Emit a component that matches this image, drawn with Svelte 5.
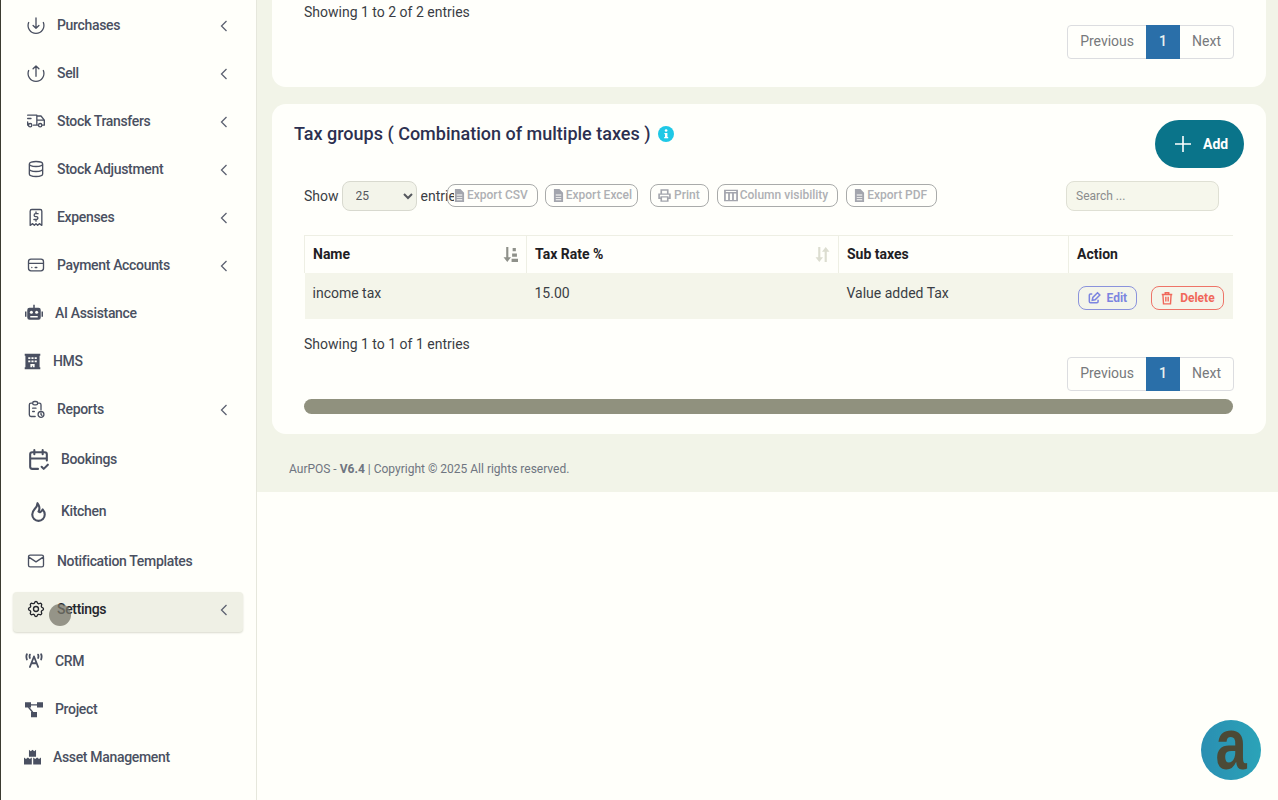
<script lang="ts">
  type NavItem = { label: string; icon: string; kind: string; arrow?: boolean; active?: boolean };

  const navItems: NavItem[] = [
    { label: 'Purchases', icon: 'download', kind: 'line', arrow: true },
    { label: 'Sell', icon: 'upload', kind: 'line', arrow: true },
    { label: 'Stock Transfers', icon: 'truck', kind: 'line', arrow: true },
    { label: 'Stock Adjustment', icon: 'database', kind: 'line', arrow: true },
    { label: 'Expenses', icon: 'receipt', kind: 'line', arrow: true },
    { label: 'Payment Accounts', icon: 'card', kind: 'line', arrow: true },
    { label: 'AI Assistance', icon: 'robot', kind: 'solid' },
    { label: 'HMS', icon: 'hotel', kind: 'solid-wide' },
    { label: 'Reports', icon: 'report', kind: 'line', arrow: true },
    { label: 'Bookings', icon: 'calendar', kind: 'tall' },
    { label: 'Kitchen', icon: 'flame', kind: 'tall' },
    { label: 'Notification Templates', icon: 'mail', kind: 'line' },
    { label: 'Settings', icon: 'settings', kind: 'line', arrow: true, active: true },
    { label: 'CRM', icon: 'tower', kind: 'solid' },
    { label: 'Project', icon: 'diagram', kind: 'solid' },
    { label: 'Asset Management', icon: 'cubes', kind: 'solid-wide' }
  ];

  const toolButtons = [
    { label: 'Export CSV', icon: 'file' },
    { label: 'Export Excel', icon: 'file' },
    { label: 'Print', icon: 'print' },
    { label: 'Column visibility', icon: 'columns' },
    { label: 'Export PDF', icon: 'file' }
  ];
</script>

{#snippet navIcon(name: string)}
  <svg class="nav-icon" viewBox="0 0 24 24" fill="none" stroke="currentColor" stroke-width="1.6" stroke-linecap="round" stroke-linejoin="round" aria-hidden="true">
    {#if name === 'download'}
      <path d="M12 3.5V16M8.5 12.5L12 16l3.5-3.5M3.2 9A9.5 9.5 0 1 0 20.8 9" />
    {:else if name === 'upload'}
      <path d="M12 16V3.5M8.5 7L12 3.5 15.5 7M3.2 9A9.5 9.5 0 1 0 20.8 9" />
    {:else if name === 'truck'}
      <path d="M5 17m-2 0a2 2 0 1 0 4 0a2 2 0 1 0-4 0M17 17m-2 0a2 2 0 1 0 4 0a2 2 0 1 0-4 0M3 17H2v-4M2 5h11v12M9 17h6M19 17h3v-6h-9M13 6h5l4 5M2 9h4" />
    {:else if name === 'database'}
      <path d="M12 6m-8 0a8 3 0 1 0 16 0a8 3 0 1 0-16 0M4 6v6a8 3 0 0 0 16 0V6M4 12v6a8 3 0 0 0 16 0v-6" />
    {:else if name === 'receipt'}
      <path d="M5 22V5a2 2 0 0 1 2-2h10a2 2 0 0 1 2 2v17l-3-2-2 2-2-2-2 2-2-2-3 2M14.5 8h-3a1.5 1.5 0 0 0 0 3.5h1a1.5 1.5 0 0 1 0 3.5h-3M12 15v2M12 6v2" />
    {:else if name === 'card'}
      <path d="M6 5h12a3 3 0 0 1 3 3v8a3 3 0 0 1-3 3H6a3 3 0 0 1-3-3V8a3 3 0 0 1 3-3zM3 10h18M7 15h.01M11 15h2" />
    {:else if name === 'robot'}
      <g fill="currentColor" stroke="none">
        <path d="M11 1h2v4h-2zM6 5h12a3 3 0 0 1 3 3v10a3 3 0 0 1-3 3H6a3 3 0 0 1-3-3V8a3 3 0 0 1 3-3zM0 10h2v7H0zM22 10h2v7h-2z" />
        <circle cx="8.5" cy="11" r="2" fill="#fffffa" />
        <circle cx="15.5" cy="11" r="2" fill="#fffffa" />
        <path d="M7 16h10v2H7z" fill="#fffffa" />
      </g>
    {:else if name === 'hotel'}
      <path fill="currentColor" stroke="none" fill-rule="evenodd" d="M1 1h22v3h-1v16h1v3H1v-3h1V4H1zM6 6v2.5h3V6zM10.5 6v2.5h3V6zM15 6v2.5h3V6zM6 10.5V13h3v-2.5zM10.5 10.5V13h3v-2.5zM15 10.5V13h3v-2.5zM9 15.5V20h2.5v-2h1v2H15v-4.5z" />
    {:else if name === 'report'}
      <path d="M8 5H6a2 2 0 0 0-2 2v12a2 2 0 0 0 2 2h5M18 13V7a2 2 0 0 0-2-2h-2M8 5a2 2 0 0 1 2-2h2a2 2 0 0 1 2 2v0a2 2 0 0 1-2 2h-2a2 2 0 0 1-2-2zM8 11h4M8 15h2M18 15a3.5 3.5 0 1 0 0 7 3.5 3.5 0 0 0 0-7zM18 17v1.5l1 1" />
    {:else if name === 'calendar'}
      <path d="M11.5 21H6a2 2 0 0 1-2-2V7a2 2 0 0 1 2-2h12a2 2 0 0 1 2 2v6M16 3v4M8 3v4M4 11h16M15 19l2 2 4-4" stroke-width="2" />
    {:else if name === 'flame'}
      <path d="M12 12c2-2.96 0-7-1-8 0 3.038-1.773 4.741-3 6-1.226 1.26-2 3.24-2 5a6 6 0 1 0 12 0c0-1.532-1.056-3.94-2-5-1.786 3-2.791 3-4 2z" stroke-width="2" />
    {:else if name === 'mail'}
      <path d="M5 5h14a2 2 0 0 1 2 2v10a2 2 0 0 1-2 2H5a2 2 0 0 1-2-2V7a2 2 0 0 1 2-2zM3 7l9 6 9-6" />
    {:else if name === 'settings'}
      <path d="M10.325 4.317c.426-1.756 2.924-1.756 3.35 0a1.724 1.724 0 0 0 2.573 1.066c1.543-.94 3.31.826 2.37 2.37a1.724 1.724 0 0 0 1.065 2.572c1.756.426 1.756 2.924 0 3.35a1.724 1.724 0 0 0-1.066 2.573c.94 1.543-.826 3.31-2.37 2.37a1.724 1.724 0 0 0-2.572 1.065c-.426 1.756-2.924 1.756-3.35 0a1.724 1.724 0 0 0-2.573-1.066c-1.543.94-3.31-.826-2.37-2.37a1.724 1.724 0 0 0-1.065-2.572c-1.756-.426-1.756-2.924 0-3.35a1.724 1.724 0 0 0 1.066-2.573c-.94-1.543.826-3.31 2.37-2.37 1 .608 2.296.07 2.572-1.065zM12 9a3 3 0 1 0 0 6 3 3 0 0 0 0-6z" />
    {:else if name === 'tower'}
      <path d="M12 6L6.5 20M12 6l5.5 14M8.5 15h7M2.5 3c-1 2-1 4 0 7M21.5 3c1 2 1 4 0 7M6.5 3.5c-.6 1.5-.6 3 0 4.5M17.5 3.5c.6 1.5.6 3 0 4.5" stroke-width="2.4" />
    {:else if name === 'diagram'}
      <g fill="currentColor">
        <path stroke="none" d="M0 3h8v7H0zM16 3h8v7h-8zM8 16h8v7H8z" />
        <path d="M8 6.5h8M5 10l5 6" stroke-width="1.8" />
      </g>
    {:else if name === 'cubes'}
      <path fill="currentColor" stroke="none" d="M7 1l2.5 2L12 1l2.5 2L17 1v10H7zM0 12l2.8 2 2.7-2 2.7 2L11 12v10H0zM13 12l2.8 2 2.7-2 2.7 2L24 12v10H13z" />
    {/if}
  </svg>
{/snippet}

{#snippet toolIcon(name: string)}
  <svg class="tool-icon {name}" viewBox="0 0 12 14" preserveAspectRatio="none" aria-hidden="true">
    {#if name === 'file'}
      <path fill="currentColor" d="M1 0h6l4 4v10H1zM3 6v1h6V6zM3 8.5v1h6v-1zM3 11v1h6v-1z" fill-rule="evenodd" />
    {:else if name === 'print'}
      <path fill="none" stroke="currentColor" stroke-width="1.5" d="M3 5V1h6v4M3 10H1V5.5h10V10H9M3 8.5h6V13H3z" />
    {:else if name === 'columns'}
      <path fill="none" stroke="currentColor" stroke-width="1.5" d="M.8 1.5h10.4v11H.8zM.8 4h10.4M4.3 4v8.5M7.7 4v8.5" />
    {/if}
  </svg>
{/snippet}

{#snippet pager()}
  <nav class="pager" aria-label="Pagination">
    <span class="page-link">Previous</span>
    <span class="page-link current">1</span>
    <span class="page-link">Next</span>
  </nav>
{/snippet}

<div class="layout">
  <aside class="sidebar">
    <ul class="nav-list">
      {#each navItems as item (item.label)}
        <li class="nav-row {item.kind}" class:active={item.active}>
          {@render navIcon(item.icon)}
          <span class="nav-label">{item.label}</span>
          {#if item.arrow}
            <svg class="chevron" viewBox="0 0 8 12" fill="none" stroke="currentColor" stroke-width="1.3" aria-hidden="true"><path d="M6.5 1L1.5 6l5 5" /></svg>
          {/if}
          {#if item.active}
            <span class="cursor-dot"></span>
          {/if}
        </li>
      {/each}
    </ul>
  </aside>

  <main class="main">
    <div class="content">
      <section class="card card-first">
        <p class="table-info first-info">Showing 1 to 2 of 2 entries</p>
        <div class="pager-row">{@render pager()}</div>
      </section>

      <section class="card card-groups">
        <header class="card-head">
          <h2 class="card-title">
            Tax groups ( Combination of multiple taxes )
            <svg class="info-icon" viewBox="0 0 16 16" aria-hidden="true">
              <circle cx="8" cy="8" r="8" fill="#1fc8e6" />
              <rect x="7" y="7" width="2.4" height="5" fill="#fff" />
              <rect x="6.2" y="11" width="4" height="1.3" fill="#fff" />
              <rect x="6.4" y="7" width="2" height="1.2" fill="#fff" />
              <circle cx="8.1" cy="4.5" r="1.3" fill="#fff" />
            </svg>
          </h2>
          <button class="add-btn" type="button">
            <svg viewBox="0 0 20 20" width="20" height="20" fill="none" stroke="#fff" stroke-width="1.6" aria-hidden="true"><path d="M10 2v16M2 10h16" /></svg>
            Add
          </button>
        </header>

        <div class="toolbar">
          <div class="length-control">
            Show
            <select class="length-select">
              <option>25</option>
            </select>
            entries
          </div>
          <div class="tool-buttons">
            {#each toolButtons as button (button.label)}
              <span class="tool-btn">
                {@render toolIcon(button.icon)}
                {button.label}
              </span>
            {/each}
          </div>
          <input class="search-input" type="text" placeholder="Search ..." />
        </div>

        <table class="groups-table">
          <thead>
            <tr>
              <th class="col-name">
                <span class="th-inner">
                  Name
                  <svg class="sort-icon strong" viewBox="0 0 14 14" aria-hidden="true"><path fill="currentColor" d="M3 0h2v9.5h2.5L4 14 .5 9.5H3zM9 1h3v3H9zM8.5 6H13v3H8.5zM8 11h6v3H8z" /></svg>
                </span>
              </th>
              <th class="col-rate">
                <span class="th-inner">
                  Tax Rate %
                  <svg class="sort-icon" viewBox="0 0 14 14" aria-hidden="true"><path fill="currentColor" d="M3 0h2v9.5h2.5L4 14 .5 9.5H3zM9 14h2V4.5h2.5L10 0 6.5 4.5H9z" /></svg>
                </span>
              </th>
              <th class="col-sub">Sub taxes</th>
              <th class="col-action">Action</th>
            </tr>
          </thead>
          <tbody>
            <tr>
              <td>income tax</td>
              <td>15.00</td>
              <td>Value added Tax</td>
              <td class="cell-actions">
                <span class="row-btn edit">
                  <svg viewBox="0 0 24 24" width="14" height="14" fill="none" stroke="currentColor" stroke-width="2.6" aria-hidden="true"><path d="M9 5H6a2 2 0 0 0-2 2v11a2 2 0 0 0 2 2h11a2 2 0 0 0 2-2v-3M10 11l-1 5 5-1 8-8-4-4z" /></svg>
                  Edit
                </span>
                <span class="row-btn delete">
                  <svg viewBox="0 0 24 24" width="14" height="14" fill="none" stroke="currentColor" stroke-width="2.4" aria-hidden="true"><path d="M3 6h18M9 6V3h6v3M5 6l1 16h12l1-16M10 10v8M14 10v8" /></svg>
                  Delete
                </span>
              </td>
            </tr>
          </tbody>
        </table>

        <p class="table-info">Showing 1 to 1 of 1 entries</p>
        <div class="pager-row">{@render pager()}</div>
        <div class="scroll-thumb"></div>
      </section>

      <footer class="page-footer">AurPOS - <strong>V6.4</strong> | Copyright © 2025 All rights reserved.</footer>
    </div>
  </main>

  <div class="logo-bubble"><span>a</span></div>
</div>

<style>
  :global(body) {
    background: #fffffa;
    font-family: Roboto, "Liberation Sans", sans-serif;
    color: #2e3138;
  }

  .layout {
    display: flex;
    height: 800px;
    overflow: hidden;
  }

  .sidebar {
    flex: 0 0 257px;
    box-sizing: border-box;
    border-left: 1px solid #3b3b30;
    border-right: 1px solid #e6e7dc;
    overflow: hidden;
    padding-top: 1px;
  }

  .nav-list {
    list-style: none;
    margin: 0;
    padding: 0;
  }

  .nav-row {
    position: relative;
    display: flex;
    align-items: center;
    height: 48px;
    box-sizing: border-box;
    font-size: 14px;
    font-weight: 500;
    letter-spacing: -0.33px;
    color: #4a5061;
  }

  .nav-row.line { padding-left: 25px; }
  .nav-row.solid { padding-left: 24px; }
  .nav-row.solid-wide { padding-left: 23px; }
  .nav-row.tall { padding-left: 25px; height: 52px; }

  .nav-row.active {
    color: #24262c;
    margin-bottom: 4px;
  }

  .nav-row.active::before {
    content: "";
    position: absolute;
    left: 12px;
    right: 13px;
    top: 7px;
    bottom: 1px;
    border-radius: 4px;
    background: #eff0e5;
    box-shadow: 0 1px 2px #d9dacd;
  }

  .nav-icon {
    position: relative;
    flex: none;
    width: 20px;
    height: 20px;
    margin-right: 11px;
  }

  .solid .nav-icon { width: 18px; height: 18px; margin-right: 12px; }
  .solid-wide .nav-icon { width: 17px; height: 17px; margin-right: 12px; }
  .tall .nav-icon { width: 25px; height: 25px; margin-right: 10px; }

  .nav-label { position: relative; }

  .chevron {
    position: absolute;
    left: 219px;
    top: 50%;
    width: 8px;
    height: 12px;
    margin-top: -5px;
    color: #5d6271;
  }

  .cursor-dot {
    position: absolute;
    left: 48px;
    top: 19px;
    width: 22px;
    height: 22px;
    border-radius: 50%;
    background: #77766a;
    opacity: 0.75;
    filter: blur(0.6px);
  }

  .main {
    flex: 1;
    min-width: 0;
  }

  .content {
    height: 492px;
    box-sizing: border-box;
    padding: 0 12px 0 15px;
    background: #f2f4e8;
  }

  .card {
    background: #fffffb;
    border-radius: 14px;
  }

  .card-first {
    height: 87px;
    border-radius: 0 0 14px 14px;
    padding: 0 32px;
    box-sizing: border-box;
  }

  .card-groups {
    margin-top: 17px;
    height: 330px;
    box-sizing: border-box;
    padding: 16px 32px 0;
  }

  .table-info {
    margin: 0;
    padding-top: 3px;
    font-size: 14px;
    line-height: 17px;
    color: #3a3d44;
  }

  .first-info {
    padding-top: 4px;
    height: 21px;
  }

  .pager-row {
    display: flex;
    justify-content: flex-end;
  }

  .pager {
    display: flex;
    height: 34px;
    box-sizing: border-box;
    border: 1px solid #dcdde0;
    border-radius: 4px;
    font-size: 14px;
    color: #77797c;
  }

  .page-link {
    display: flex;
    align-items: center;
    justify-content: center;
    padding: 0 12px 2px;
  }

  .page-link.current {
    width: 34px;
    box-sizing: border-box;
    padding: 0 0 2px;
    margin: -1px 0;
    background: #2a6fa9;
    color: #e8f2f0;
    font-weight: 500;
  }

  .card-head {
    display: flex;
    justify-content: space-between;
    align-items: flex-start;
    margin: 0 -10px;
    height: 61px;
  }

  .card-title {
    margin: 0;
    display: flex;
    align-items: center;
    gap: 8px;
    font-size: 18px;
    font-weight: 500;
    line-height: 28px;
    color: #2c3050;
  }

  .info-icon {
    width: 16px;
    height: 16px;
  }

  .add-btn {
    display: flex;
    align-items: center;
    gap: 10px;
    height: 48px;
    width: 89px;
    box-sizing: border-box;
    padding: 0 0 0 18px;
    border: none;
    border-radius: 24px;
    background: #0a748a;
    color: #fff;
    font-family: inherit;
    font-size: 14px;
    font-weight: 700;
  }

  .toolbar {
    display: flex;
    align-items: flex-start;
    height: 54px;
  }

  .length-control {
    flex: none;
    width: 152px;
    margin-right: -9px;
    display: flex;
    align-items: center;
    gap: 3px;
    white-space: nowrap;
    font-size: 14px;
    height: 30px;
    color: #3a3d44;
  }

  .length-select {
    flex: none;
    width: 75px;
    height: 30px;
    margin-right: 1px;
    padding: 0 0 0 9px;
    border: 1px solid #d8d9cf;
    border-radius: 8px;
    background: #f3f4ea;
    font-family: inherit;
    font-size: 12px;
    color: #55585e;
  }

  .tool-buttons {
    display: flex;
    padding-top: 3px;
  }

  .tool-btn {
    display: flex;
    align-items: center;
    gap: 2px;
    height: 23px;
    box-sizing: border-box;
    padding: 0 9px 1px 7px;
    margin-right: 7px;
    border: 1px solid #a9abaa;
    border-radius: 8px;
    font-size: 12px;
    font-weight: 500;
    color: #aeb0b4;
    white-space: nowrap;
  }

  .tool-btn:nth-child(1) { padding-left: 6px; }
  .tool-btn:nth-child(2) { padding-right: 5px; margin-right: 12px; }
  .tool-btn:nth-child(3) { gap: 3px; padding-right: 8px; margin-right: 8px; }
  .tool-btn:nth-child(4) { padding-left: 6px; margin-right: 8px; }

  .tool-icon {
    width: 11px;
    height: 13px;
    flex: none;
    color: #a3a5ad;
    background: #fffffb;
  }

  .tool-icon.print { width: 13px; }
  .tool-icon.columns { width: 14px; }

  .search-input {
    margin-left: auto;
    margin-right: 15px;
    width: 153px;
    height: 30px;
    box-sizing: border-box;
    padding: 0 9px;
    border: 1px solid #dfe0d4;
    border-radius: 8px;
    background: #f6f7ec;
    font-family: inherit;
    font-size: 12px;
  }

  .search-input::placeholder { color: #8a8c8c; }

  .groups-table {
    width: 929px;
    table-layout: fixed;
    border-collapse: collapse;
    font-size: 14px;
  }

  .col-name { width: 222px; }
  .col-rate { width: 312px; }
  .col-sub { width: 230px; }

  .groups-table th {
    height: 37px;
    box-sizing: border-box;
    padding: 0 8px;
    text-align: left;
    font-weight: 700;
    color: #1e2024;
    border: 1px solid #eeefe4;
    border-bottom: none;
  }

  .groups-table th:last-child { border-right: none; }

  .th-inner {
    display: flex;
    align-items: center;
    justify-content: space-between;
  }

  .sort-icon {
    width: 15px;
    height: 15px;
    color: #dcddd0;
  }

  .sort-icon.strong { color: #8f918a; }

  .groups-table td {
    height: 46px;
    box-sizing: border-box;
    padding: 0 8px 6px;
    background: #f4f5ea;
    color: #3a3d44;
  }

  .groups-table td.cell-actions {
    padding: 4px 8px 0 9px;
    display: flex;
    gap: 14px;
    align-items: center;
  }

  .row-btn {
    display: flex;
    align-items: center;
    gap: 6px;
    height: 24px;
    box-sizing: border-box;
    padding: 0 8px;
    border-radius: 8px;
    font-size: 12px;
    font-weight: 700;
  }

  .row-btn.edit {
    padding-right: 9px;
    color: #7c85e0;
    border: 1px solid #8b93dc;
  }

  .row-btn.delete {
    color: #f0685a;
    border: 1px solid #ee7468;
  }

  .card-groups .table-info {
    margin-top: 14px;
    height: 21px;
  }

  .scroll-thumb {
    height: 15px;
    width: 929px;
    margin-top: 8px;
    border-radius: 8px;
    background: #90917e;
  }

  .page-footer {
    margin: 27px 0 0 17px;
    font-size: 12px;
    line-height: 16px;
    color: #6f7580;
  }

  .logo-bubble {
    position: fixed;
    left: 1201px;
    top: 720px;
    width: 60px;
    height: 60px;
    border-radius: 50%;
    display: flex;
    align-items: center;
    justify-content: center;
    background: linear-gradient(90deg, #2a8fb2, #2ba3b8);
  }

  .logo-bubble span {
    font-family: "Liberation Sans", sans-serif;
    font-weight: 700;
    font-size: 72px;
    line-height: 60px;
    color: #4c4a36;
    transform: translateY(-6px) scaleX(0.78);
  }
</style>
